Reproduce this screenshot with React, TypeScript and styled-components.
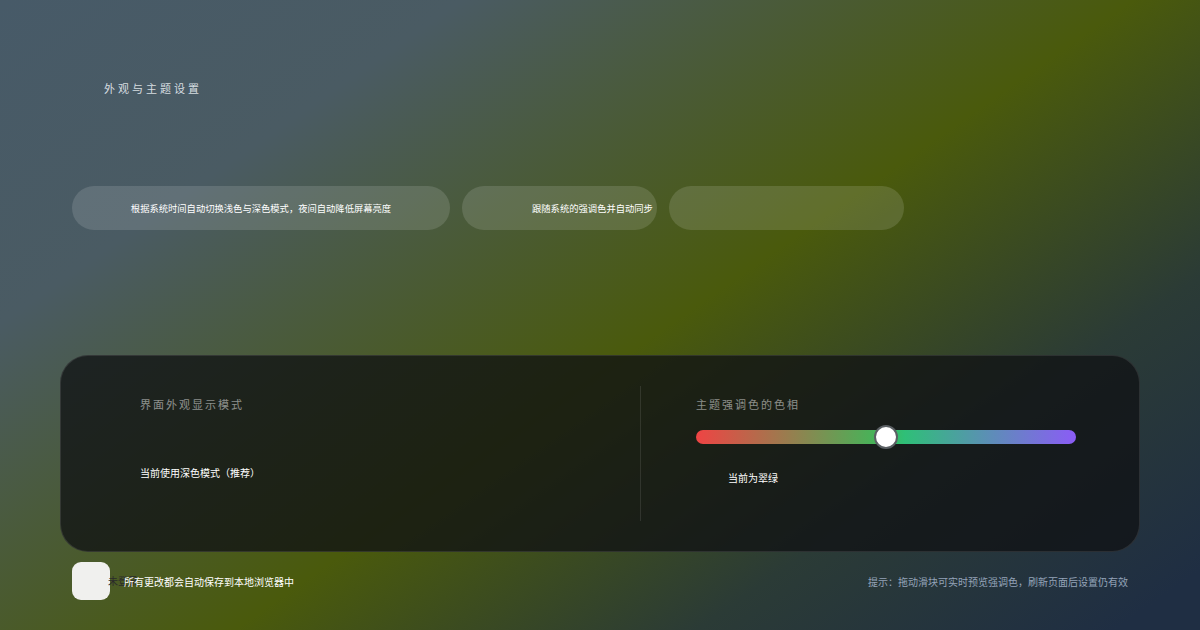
import React from 'react';
import styled, { createGlobalStyle } from 'styled-components';

const GlobalStyle = createGlobalStyle`
    html, body {
        margin: 0;
        padding: 0;
        width: 1200px;
        height: 630px;
        overflow: hidden;
    }
    body {
        font-family: "Noto Sans CJK SC", "Noto Sans", sans-serif;
    }
`;

const Page = styled.div`
    width: 1200px;
    height: 630px;
    box-sizing: border-box;
    padding: 0 60px;
    display: flex;
    flex-direction: column;
    background: linear-gradient(145deg, #475a68 0%, #4a5b63 22%, #4a5a0c 54%, #2b3b36 76%, #1f2e43 96%);
`;

const Title = styled.div`
    margin-top: 80px;
    padding-left: 44px;
    font-size: 11px;
    line-height: 16px;
    letter-spacing: 3px;
    color: #d6dde0;
`;

const PillRow = styled.div`
    margin-top: 90px;
    padding: 0 12px;
    display: flex;
    gap: 12px;
`;

const Pill = styled.div<{ $width: number; $pad?: string; $justify?: string }>`
    width: ${p => p.$width}px;
    height: 44px;
    box-sizing: border-box;
    border-radius: 22px;
    padding: ${p => p.$pad || '0'};
    display: flex;
    align-items: center;
    justify-content: ${p => p.$justify || 'center'};
    background: rgba(255, 255, 255, 0.13);
    color: #ffffff;
    font-size: 9.3px;
    white-space: nowrap;
`;

const Panel = styled.div`
    margin-top: 125px;
    height: 197px;
    box-sizing: border-box;
    padding: 30px 0;
    border-radius: 28px;
    border: 1px solid rgba(255, 255, 255, 0.1);
    background: rgba(16, 17, 20, 0.76);
    display: grid;
    grid-template-columns: 579px 1px 1fr;
`;

const Column = styled.div<{ $pad: string }>`
    padding: ${p => p.$pad};
    display: flex;
    flex-direction: column;
`;

const Divider = styled.div`
    background: rgba(255, 255, 255, 0.1);
`;

const Label = styled.div`
    margin-top: 10px;
    font-size: 11px;
    line-height: 16px;
    letter-spacing: 2px;
    color: rgba(255, 255, 255, 0.5);
`;

const Value = styled.div<{ $top: number; $indent?: number }>`
    margin-top: ${p => p.$top}px;
    padding-left: ${p => p.$indent || 0}px;
    font-size: 10px;
    line-height: 16px;
    color: #ffffff;
`;

const Slider = styled.div`
    margin-top: 13px;
    height: 24px;
    position: relative;
    display: flex;
    align-items: center;
`;

const Track = styled.div`
    flex: 1;
    height: 14px;
    border-radius: 7px;
    background: linear-gradient(90deg, #ef4444 0%, #3cba5a 50%, #2fbf78 55%, #8b5cf6 100%);
`;

const Thumb = styled.div`
    position: absolute;
    top: 0;
    width: 24px;
    height: 24px;
    box-sizing: border-box;
    margin-left: -12px;
    border-radius: 50%;
    background: #ffffff;
    border: 2px solid #5a5f63;
`;

const Footer = styled.div`
    margin-top: 10px;
    padding: 0 12px;
    display: flex;
    align-items: center;
    gap: 14px;
`;

const Badge = styled.div`
    width: 38px;
    height: 38px;
    flex: none;
    box-sizing: border-box;
    padding-left: 36px;
    border-radius: 9px;
    background: #f0f0ee;
    color: #2a2a2a;
    font-size: 10px;
    line-height: 38px;
    white-space: nowrap;
`;

const FooterText = styled.div`
    position: relative;
    font-size: 10px;
    color: #ffffff;
    white-space: nowrap;
`;

const FooterNote = styled.div`
    margin-left: auto;
    font-size: 10px;
    color: #94a3b8;
    white-space: nowrap;
`;

export default function App() {
    const hue = 50;

    return (
        <>
            <GlobalStyle />
            <Page>
                <Title>外观与主题设置</Title>
                <PillRow>
                    <Pill $width={378}>根据系统时间自动切换浅色与深色模式，夜间自动降低屏幕亮度</Pill>
                    <Pill $width={195} $pad="0 5px 0 70px" $justify="flex-start">跟随系统的强调色并自动同步</Pill>
                    <Pill $width={235} />
                </PillRow>
                <Panel>
                    <Column $pad="0 0 0 79px">
                        <Label>界面外观显示模式</Label>
                        <Value $top={53}>当前使用深色模式（推荐）</Value>
                    </Column>
                    <Divider />
                    <Column $pad="0 63px 0 55px">
                        <Label>主题强调色的色相</Label>
                        <Slider>
                            <Track />
                            <Thumb style={{ left: `${hue}%` }} />
                        </Slider>
                        <Value $top={21} $indent={32}>当前为翠绿</Value>
                    </Column>
                </Panel>
                <Footer>
                    <Badge>未登录</Badge>
                    <FooterText>所有更改都会自动保存到本地浏览器中</FooterText>
                    <FooterNote>提示：拖动滑块可实时预览强调色，刷新页面后设置仍有效</FooterNote>
                </Footer>
            </Page>
        </>
    );
}
